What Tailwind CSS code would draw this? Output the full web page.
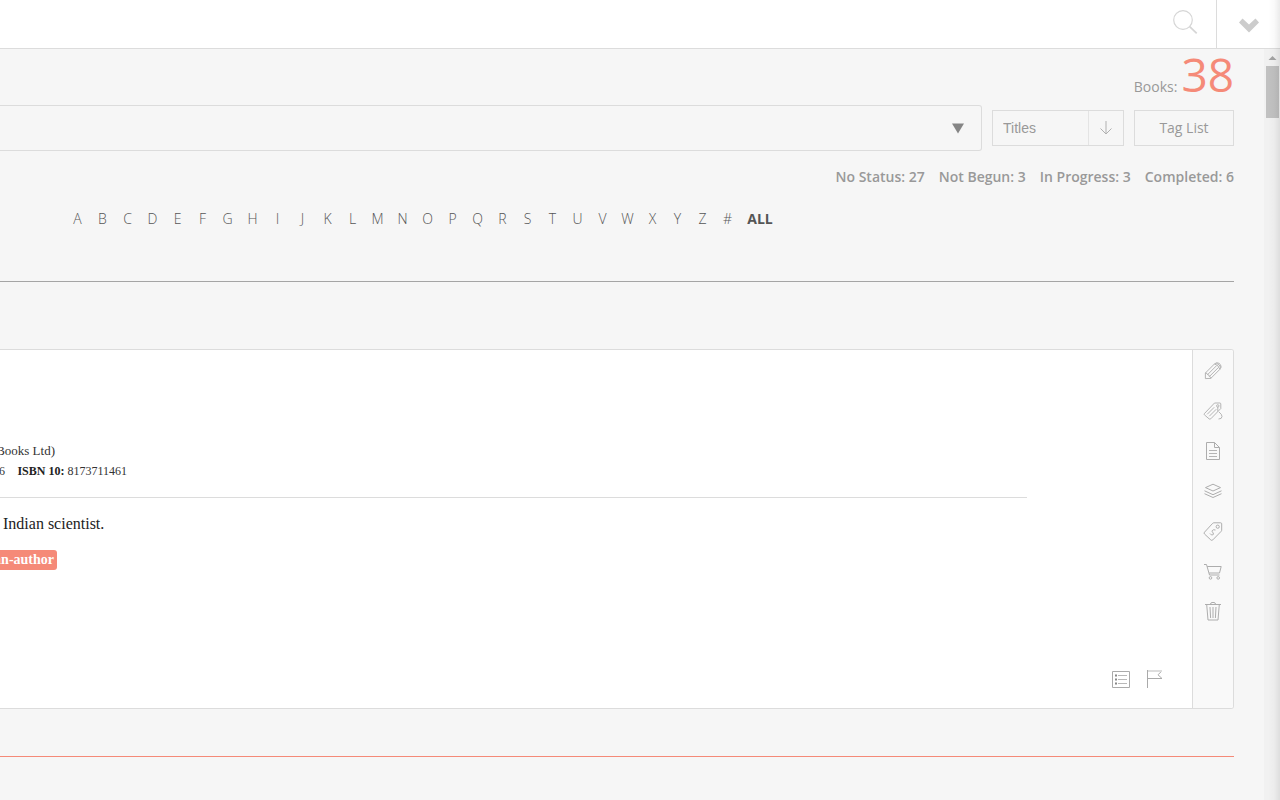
<!DOCTYPE html>
<html lang="en">
<head>
<meta charset="utf-8">
<title>Library</title>
<script src="https://cdn.jsdelivr.net/npm/@tailwindcss/browser@4"></script>
</head>
<body class="relative h-screen overflow-hidden flex flex-col bg-[#f6f6f6] font-['Open_Sans',sans-serif] text-sm text-[#999]">
<header class="flex h-[49px] shrink-0 border-b border-[#dcdcdc] bg-white">
  <button aria-label="Search" class="ml-auto w-[62px] flex items-center justify-center">
    <svg class="w-[26px] h-[26px] -mt-1" viewBox="0 0 26 26" fill="none" stroke="#d6d6d6"><circle cx="11" cy="11" r="9.3" stroke-width="1.2"/><path d="M17.7 17.7l7 6.6" stroke-width="1.8"/></svg>
  </button>
  <button aria-label="Open menu" class="w-16 border-l border-[#dcdcdc] flex items-center justify-center pt-[2px]">
    <svg class="w-[22px] h-4" viewBox="0 0 22 16" fill="#ccc"><path d="M1 5.5L4.5 1.5L11 7.5L17.5 1.5L21 5.5L11 15.5z"/></svg>
  </button>
</header>
<div class="flex flex-1 min-h-0">
<main class="flex-1 min-w-0 pr-[30px]">
  <div class="flex h-14 items-baseline justify-end gap-1"><span>Books:</span><strong class="text-[46px] leading-[50px] font-normal text-[#f58a78]">38</strong></div>
  <div class="flex items-center gap-[10px]">
    <button aria-label="Choose collection" class="flex-1 h-[46px] flex items-center justify-end pr-4 border border-l-0 border-[#dcdcdc] rounded-r-[3px]">
      <svg class="w-[14px] h-[11px]" viewBox="0 0 14 11"><path d="M1 0.5h12L7 10.5z" fill="#858585"/></svg>
    </button>
    <div class="flex h-9 w-[132px] border border-[#dcdcdc]">
      <select aria-label="Sort by" class="appearance-none w-24 pl-[10px] border-r border-[#e4e4e4] font-['Liberation_Sans',sans-serif] text-sm text-[#999]"><option>Titles</option></select>
      <button aria-label="Sort descending" class="flex-1 flex items-center justify-center">
        <svg class="w-[14px] h-[14px]" viewBox="0 0 14 14" fill="none" stroke="#b0b0b0"><path d="M7 0v13M1.500 7.500L7 13l5.500-5.500"/></svg>
      </button>
    </div>
    <button class="h-9 w-[100px] border border-[#dcdcdc]">Tag List</button>
  </div>
  <ul class="flex h-[52px] items-center justify-end gap-[14px] font-semibold">
    <li>No Status: 27</li><li>Not Begun: 3</li><li>In Progress: 3</li><li>Completed: 6</li>
  </ul>
  <nav aria-label="Filter by letter" class="flex h-8 items-center pl-[65px] font-light text-[#555]">
    <a href="#" class="w-[25px] text-center">A</a><a href="#" class="w-[25px] text-center">B</a><a href="#" class="w-[25px] text-center">C</a><a href="#" class="w-[25px] text-center">D</a><a href="#" class="w-[25px] text-center">E</a><a href="#" class="w-[25px] text-center">F</a><a href="#" class="w-[25px] text-center">G</a><a href="#" class="w-[25px] text-center">H</a><a href="#" class="w-[25px] text-center">I</a><a href="#" class="w-[25px] text-center">J</a><a href="#" class="w-[25px] text-center">K</a><a href="#" class="w-[25px] text-center">L</a><a href="#" class="w-[25px] text-center">M</a><a href="#" class="w-[25px] text-center">N</a><a href="#" class="w-[25px] text-center">O</a><a href="#" class="w-[25px] text-center">P</a><a href="#" class="w-[25px] text-center">Q</a><a href="#" class="w-[25px] text-center">R</a><a href="#" class="w-[25px] text-center">S</a><a href="#" class="w-[25px] text-center">T</a><a href="#" class="w-[25px] text-center">U</a><a href="#" class="w-[25px] text-center">V</a><a href="#" class="w-[25px] text-center">W</a><a href="#" class="w-[25px] text-center">X</a><a href="#" class="w-[25px] text-center">Y</a><a href="#" class="w-[25px] text-center">Z</a><a href="#" class="w-[25px] text-center">#</a><a href="#" class="w-10 text-center font-bold">ALL</a>
  </nav>
  <hr class="mt-[46px] border-[#a5a5a5]">
  <article class="mt-[67px] flex min-h-[360px] border border-l-0 border-[#dcdcdc] rounded-r-[3px] bg-white overflow-hidden">
    <div class="flex-1 min-w-0 flex flex-col pt-[90px] pb-5 font-['Roboto_Slab','Liberation_Serif',serif] text-[13px] text-[#333]">
      <div class="flex w-[55px] justify-end whitespace-nowrap leading-[21px]"><p>Books Ltd)</p></div>
      <p class="flex w-[127px] justify-between whitespace-nowrap text-xs leading-[21px]"><span class="w-[5px] flex justify-end">6</span><span><b class="text-[#222]">ISBN 10:</b> 8173711461</span></p>
      <hr class="mt-[15px] mr-[165px] border-[#dcdcdc]">
      <p class="mt-4 pl-[3px] text-base leading-5 text-[#222]">Indian scientist.</p>
      <div class="mt-4 flex w-[57px] justify-end"><a href="#" class="h-5 px-[3px] rounded-[3px] bg-[#f58a78] text-sm leading-5 font-bold text-white whitespace-nowrap">an-author</a></div>
      <div class="mt-auto flex justify-end gap-4 pr-[30px]">
        <button aria-label="Details"><svg class="w-[18px] h-[18px]" viewBox="0 0 18 18" fill="none" stroke="#aaa"><path d="M.5 1.5h17v16H.5z"/><path d="M6 5.5h9M6 9.5h9M6 13.5h9" stroke="#b8b8b8"/><path d="M3 5.5h2M3 9.5h2M3 13.5h2" stroke="#888" stroke-width="2"/></svg></button>
        <button aria-label="Flag"><svg class="w-4 h-[18px]" viewBox="0 0 16 18" fill="none" stroke="#aaa"><path d="M1.500 0v18M2 8.500h14L12 4.800l3.500-3.500"/><path d="M2 1h14" stroke="#ddd" stroke-width="2"/></svg></button>
      </div>
    </div>
    <div class="w-[41px] flex flex-col pt-px border-l border-[#dcdcdc] bg-[#f9f9f9] text-[#adadad] [&>button]:h-10 [&>button]:flex [&>button]:items-center [&>button]:justify-center">
      <button aria-label="Edit"><svg class="w-5 h-5" viewBox="0 0 20 20" fill="none" stroke="currentColor" stroke-width=".9"><path d="M2.400 17.600V12L11.500 2.900q2.300-2 4.600-.6l1.400 1.400q1.500 2.300-.6 4.600L7.800 17.400z"/><path d="M2.400 12q2 0 2.200 1.600 1.700 0 1.800 1.900 1.600.2 1.600 1.900M4.600 13.600l9-9M6.400 15.500l9-9M11.500 2.900q3.900.8 5.400 5.400M13.300 2.200q3.500 1 4.500 4.500"/></svg></button>
      <button aria-label="Tags"><svg class="w-5 h-5" viewBox="0 0 20 20" fill="none" stroke="currentColor" stroke-width=".9"><path d="M1.300 12.700L11.500 2h5.300q1 0 1 1v4.500L7.800 17.800q-.9.8-1.800 0l-4.600-4q-.6-.6-.1-1.100z"/><circle cx="14.800" cy="4.900" r="1.200"/><path d="M4.200 13.300l7-7M6.300 15.200l7-7M14.800 6v4.500M16 11q3 2.300 3 4.500 0 2.500-3.500 2.500"/></svg></button>
      <button aria-label="Notes"><svg class="w-5 h-5" viewBox="0 0 20 20" fill="none" stroke="currentColor" stroke-width="1"><path d="M3.5 1.5h8l5 5v12h-13zM11.5 1.5v5h5"/><path d="M6 9.5h8M6 12.5h8M6 15.5h8" stroke-width=".9"/></svg></button>
      <button aria-label="Collections"><svg class="w-5 h-5" viewBox="0 0 20 20" fill="none" stroke="currentColor" stroke-width="1"><path d="M10 3.200l7.500 3.400L10 10 2.500 6.600zM1.500 9.800L10 13.700l8.500-3.900M1.500 12.700L10 16.500l8.500-3.800"/></svg></button>
      <button aria-label="Price"><svg class="w-5 h-5" viewBox="0 0 20 20" fill="none" stroke="currentColor" stroke-width="1"><path d="M1.500 11.200L9.700 2.300q.5-.5 1.300-.5h6.700q1 0 1 1v6.200q0 .8-.5 1.300l-8.400 8.600q-1 1-2 0L1.500 13q-.9-.9 0-1.800z"/><circle cx="14.700" cy="5.700" r="1.600"/><path d="M12.500 9q-2.500-.8-3.300.7-.4 1 .8 2.100 1.100 1.400-.2 2.100-1.500.6-2.800-1.400"/></svg></button>
      <button aria-label="Buy"><svg class="w-5 h-5" viewBox="0 0 20 20" fill="none" stroke="currentColor" stroke-width="1"><path d="M1 3.500h2.500L6.500 14h10M4.200 5.500h14L16.500 12H6.200"/><circle cx="7.500" cy="16.900" r="1.300"/><circle cx="15.200" cy="16.900" r="1.300"/></svg></button>
      <button aria-label="Delete"><svg class="w-5 h-5" viewBox="0 0 20 20" fill="none" stroke="currentColor" stroke-width="1"><path d="M2 3.500h16M7.500 3.500q0-2 1.500-2h2q1.500 0 1.500 2M3.700 3.500l1.300 15.500h10l1.300-15.500M7 6l.6 11M10 6v11M13 6l-.6 11"/></svg></button>
    </div>
  </article>
  <hr class="mt-[47px] border-[#f58a78]">
</main>
<div aria-hidden="true" class="w-4 flex flex-col bg-[#f1f1f1]">
  <svg class="w-4 h-[17px]" viewBox="0 0 16 17"><path d="M4.500 11h8L8.500 7z" fill="#a3a3a3"/></svg>
  <div class="ml-[2px] mr-px h-[52px] bg-[#c1c1c1]"></div>
</div>
</div>
<div aria-hidden="true" class="pointer-events-none absolute inset-y-0 right-0 w-3 bg-linear-to-r from-black/0 via-black/2 to-black/8"></div>
</body>
</html>
